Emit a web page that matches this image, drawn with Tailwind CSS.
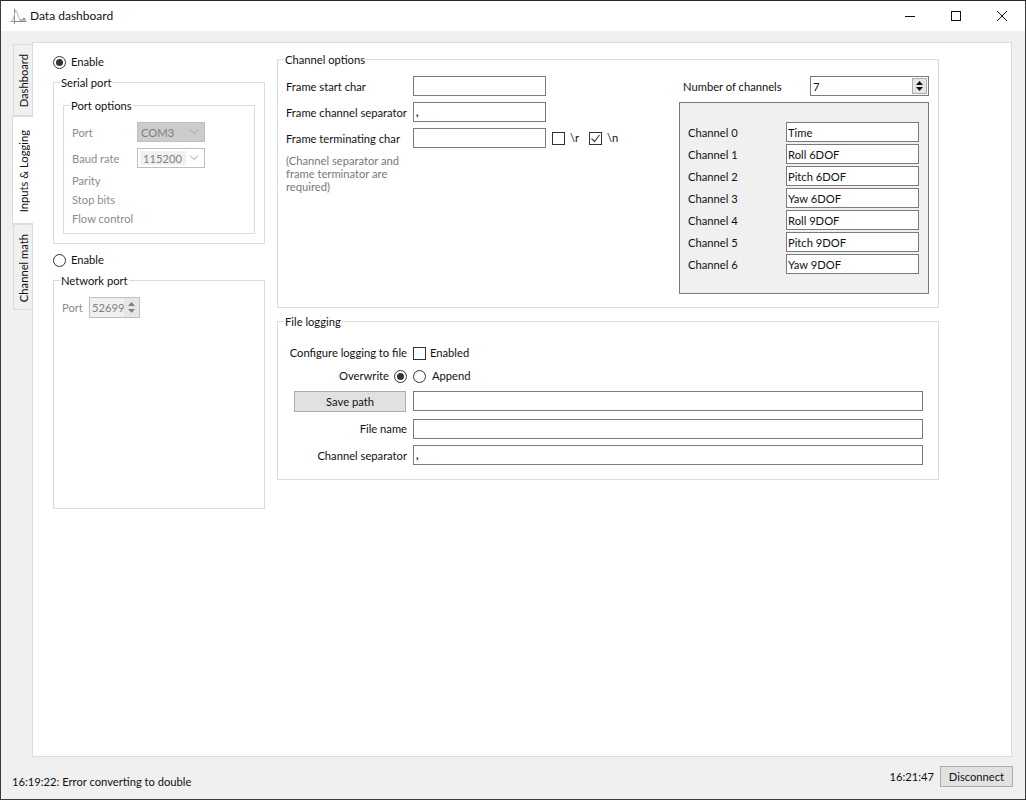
<!DOCTYPE html>
<html lang="en">

<head>
    <meta charset="UTF-8">
    <title>Data dashboard</title>
    <script src="https://cdn.jsdelivr.net/npm/@tailwindcss/browser@4"></script>
</head>

<body class="bg-[#f0f0f0]">
    <div class="w-[1026px] h-[800px] flex flex-col overflow-hidden border border-[#3c3c3c] border-t-[#2a2a2a] bg-[#f0f0f0] font-['Lato',sans-serif] text-[11.2px] leading-[16px] text-[#111]">

        <!-- title bar -->
        <div class="h-[30px] shrink-0 bg-white flex items-center">
            <svg class="ml-[9px] w-[17px] h-[17px]" viewBox="0 0 17 17" fill="none">
                <path d="M4.5 0.5V16M0.5 13.5H16.5" stroke="#8d8d8d" />
                <path d="M1.5 13C4 12 5 2 6 2C7 2 8 12 11.5 13" stroke="#b5b5b5" />
                <path d="M10 12H16M13 10.5H15" stroke="#777" />
            </svg>
            <span class="ml-[3px] text-[12px]">Data dashboard</span>
            <div class="ml-auto flex items-center h-full">
                <div class="w-[46px] flex justify-center">
                    <svg class="w-[10px] h-[10px]" viewBox="0 0 10 10"><path d="M0 5.5H10" stroke="#111" /></svg>
                </div>
                <div class="w-[46px] flex justify-center">
                    <svg class="w-[10px] h-[10px]" viewBox="0 0 10 10" fill="none"><rect x="0.5" y="0.5" width="9" height="9" stroke="#111" /></svg>
                </div>
                <div class="w-[46px] flex justify-center">
                    <svg class="w-[10px] h-[10px]" viewBox="0 0 10 10" fill="none"><path d="M0 0L10 10M10 0L0 10" stroke="#111" /></svg>
                </div>
            </div>
        </div>

        <!-- tabs and pane -->
        <div class="flex pl-[10px] pt-[11px] shrink-0">
            <div class="w-[21px] pt-[2px] flex flex-col items-end shrink-0">
                <div class="w-[18px] h-[72px] mr-px pl-[2px] pt-[2px] flex items-center justify-center border border-r-0 border-[#dcdcdc] bg-[#f0f0f0]">
                    <span class="[writing-mode:vertical-rl] rotate-180 whitespace-nowrap">Dashboard</span>
                </div>
                <div class="relative z-10 w-[21px] h-[108px] -mr-px pl-[2px] pt-[2px] flex items-center justify-center border border-r-0 border-[#dcdcdc] bg-white">
                    <span class="[writing-mode:vertical-rl] rotate-180 whitespace-nowrap">Inputs &amp; Logging</span>
                </div>
                <div class="w-[18px] h-[86px] mr-px pl-[2px] pt-[2px] flex items-center justify-center border border-r-0 border-[#dcdcdc] bg-[#f0f0f0]">
                    <span class="[writing-mode:vertical-rl] rotate-180 whitespace-nowrap">Channel math</span>
                </div>
            </div>

            <div class="w-[980px] h-[715px] border border-[#dcdcdc] bg-white flex gap-[12px] pl-[20px] pt-[11px]">

                <!-- left column -->
                <div class="w-[212px] shrink-0">
                    <div class="h-[16px] flex items-center gap-[5px]">
                        <span class="w-[13px] h-[13px] rounded-full border border-[#333] flex items-center justify-center"><span class="w-[7px] h-[7px] rounded-full bg-[#333]"></span></span>
                        <span>Enable</span>
                    </div>
                    <div class="relative mt-[12px] h-[162px] border border-[#dcdcdc] px-[9px] pt-[22px]">
                        <span class="absolute left-[6px] -top-[8px] bg-white px-px">Serial port</span>
                        <div class="relative h-[129px] border border-[#dcdcdc] pl-[8px] pt-[16px] text-[#8c8c8c]">
                            <span class="absolute left-[6px] -top-[8px] bg-white px-px text-[#111]">Port options</span>
                            <div class="flex items-center h-[20px]">
                                <span class="w-[65px] pt-[2px]">Port</span>
                                <div class="w-[68px] h-[20px] bg-[#cccccc] border border-[#bfbfbf] flex items-center justify-between pl-[3px] pr-[5px] text-[#808080]">
                                    <span class="pt-[2px]">COM3</span>
                                    <svg class="w-[10px] h-[6px]" viewBox="0 0 10 6" fill="none"><path d="M1 0.5L5 4.5L9 0.5" stroke="#a3a3a3" /></svg>
                                </div>
                            </div>
                            <div class="flex items-center h-[20px] mt-[6px]">
                                <span class="w-[65px] pt-[2px]">Baud rate</span>
                                <div class="w-[68px] h-[20px] bg-white border border-[#bfbfbf] flex items-center justify-between pl-[2px] pr-[5px] text-[#808080]">
                                    <span class="bg-[#f0f0f0] w-[46px] h-[14px] pl-[3px] leading-[15px]">115200</span>
                                    <svg class="w-[10px] h-[6px]" viewBox="0 0 10 6" fill="none"><path d="M1 0.5L5 4.5L9 0.5" stroke="#a3a3a3" /></svg>
                                </div>
                            </div>
                            <div class="mt-[3px] h-[19px] flex items-center">Parity</div>
                            <div class="h-[19px] flex items-center">Stop bits</div>
                            <div class="h-[19px] flex items-center">Flow control</div>
                        </div>
                    </div>
                    <div class="h-[16px] mt-[8px] flex items-center gap-[5px]">
                        <span class="w-[13px] h-[13px] rounded-full border border-[#333]"></span>
                        <span>Enable</span>
                    </div>
                    <div class="relative mt-[12px] h-[229px] border border-[#dcdcdc] pl-[8px] pt-[16px]">
                        <span class="absolute left-[6px] -top-[8px] bg-white px-px">Network port</span>
                        <div class="flex items-center text-[#8c8c8c]">
                            <span class="w-[27px]">Port</span>
                            <div class="w-[51px] h-[21px] bg-[#f0f0f0] border border-[#bfbfbf] flex items-center justify-between pl-[2px] text-[#808080]">
                                <span>52699</span>
                                <div class="w-[15px] h-full flex flex-col items-center justify-center gap-[3px] bg-[#e6e6e6]">
                                    <svg class="w-[7px] h-[4px]" viewBox="0 0 7 4"><path d="M3.5 0L7 4H0Z" fill="#808080" /></svg>
                                    <svg class="w-[7px] h-[4px]" viewBox="0 0 7 4"><path d="M0 0H7L3.5 4Z" fill="#808080" /></svg>
                                </div>
                            </div>
                        </div>
                    </div>
                </div>

                <!-- right column -->
                <div class="w-[662px] shrink-0 mt-[5px]">
                    <div class="relative h-[249px] border border-[#dcdcdc] flex">
                        <span class="absolute left-[6px] -top-[8px] bg-white px-px">Channel options</span>
                        <div class="w-[401px] pl-[8px] pt-[16px]">
                            <div class="flex items-center h-[20px]">
                                <span class="w-[127px] pt-[2px] whitespace-nowrap">Frame start char</span>
                                <div class="w-[133px] h-[20px] border border-[#7a7a7a]"></div>
                            </div>
                            <div class="flex items-center h-[20px] mt-[6px]">
                                <span class="w-[127px] pt-[2px] whitespace-nowrap">Frame channel separator</span>
                                <div class="w-[133px] h-[20px] border border-[#7a7a7a] pl-[2px] flex items-center font-bold">,</div>
                            </div>
                            <div class="flex items-center h-[20px] mt-[6px]">
                                <span class="w-[127px] pt-[2px] whitespace-nowrap">Frame terminating char</span>
                                <div class="w-[133px] h-[20px] border border-[#7a7a7a]"></div>
                                <span class="ml-[6px] w-[13px] h-[13px] border border-[#333]"></span>
                                <span class="ml-[5px] w-[7px]">\r</span>
                                <span class="ml-[12px] w-[13px] h-[13px] border border-[#333] flex items-center justify-center">
                                    <svg class="w-[11px] h-[11px]" viewBox="0 0 11 11" fill="none"><path d="M1.5 5.5L4.5 8.5L9.5 2" stroke="#444" stroke-width="1.2" /></svg>
                                </span>
                                <span class="ml-[5px]">\n</span>
                            </div>
                            <p class="mt-[6px] w-[125px] leading-[13px] text-[#787878]">(Channel separator and frame terminator are required)</p>
                        </div>
                        <div class="w-[250px] pt-[16px]">
                            <div class="flex items-center h-[20px]">
                                <span class="w-[131px] pl-[4px] pt-[2px] whitespace-nowrap">Number of channels</span>
                                <div class="w-[119px] h-[20px] border border-[#7a7a7a] pl-[2px] flex items-center justify-between">
                                    <span class="pt-[2px]">7</span>
                                    <div class="w-[15px] h-[16px] mr-px border border-[#adadad] bg-[#e6e6e6] flex flex-col items-center justify-center gap-[2px]">
                                        <svg class="w-[7px] h-[4px]" viewBox="0 0 7 4"><path d="M3.5 0L7 4H0Z" fill="#111" /></svg>
                                        <svg class="w-[7px] h-[4px]" viewBox="0 0 7 4"><path d="M0 0H7L3.5 4Z" fill="#111" /></svg>
                                    </div>
                                </div>
                            </div>
                            <div class="mt-[6px] h-[192px] border border-[#7a7a7a] bg-[#f0f0f0] pl-[8px] pt-[19px] flex flex-col gap-[2px]">
                                <div class="flex items-center"><span class="w-[98px] pt-[2px]">Channel 0</span><div class="w-[133px] h-[20px] pt-[2px] bg-white border border-[#7a7a7a] pl-px flex items-center">Time</div></div>
                                <div class="flex items-center"><span class="w-[98px] pt-[2px]">Channel 1</span><div class="w-[133px] h-[20px] pt-[2px] bg-white border border-[#7a7a7a] pl-px flex items-center">Roll 6DOF</div></div>
                                <div class="flex items-center"><span class="w-[98px] pt-[2px]">Channel 2</span><div class="w-[133px] h-[20px] pt-[2px] bg-white border border-[#7a7a7a] pl-px flex items-center">Pitch 6DOF</div></div>
                                <div class="flex items-center"><span class="w-[98px] pt-[2px]">Channel 3</span><div class="w-[133px] h-[20px] pt-[2px] bg-white border border-[#7a7a7a] pl-px flex items-center">Yaw 6DOF</div></div>
                                <div class="flex items-center"><span class="w-[98px] pt-[2px]">Channel 4</span><div class="w-[133px] h-[20px] pt-[2px] bg-white border border-[#7a7a7a] pl-px flex items-center">Roll 9DOF</div></div>
                                <div class="flex items-center"><span class="w-[98px] pt-[2px]">Channel 5</span><div class="w-[133px] h-[20px] pt-[2px] bg-white border border-[#7a7a7a] pl-px flex items-center">Pitch 9DOF</div></div>
                                <div class="flex items-center"><span class="w-[98px] pt-[2px]">Channel 6</span><div class="w-[133px] h-[20px] pt-[2px] bg-white border border-[#7a7a7a] pl-px flex items-center">Yaw 9DOF</div></div>
                            </div>
                        </div>
                    </div>

                    <div class="relative mt-[13px] h-[159px] border border-[#dcdcdc] pt-[23px]">
                        <span class="absolute left-[6px] -top-[8px] bg-white px-px">File logging</span>
                        <div class="flex items-center h-[16px]">
                            <span class="w-[129px] text-right whitespace-nowrap">Configure logging to file</span>
                            <span class="ml-[6px] w-[13px] h-[13px] border border-[#333]"></span>
                            <span class="ml-[4px]">Enabled</span>
                        </div>
                        <div class="flex items-center h-[16px] mt-[7px]">
                            <span class="w-[111px] text-right">Overwrite</span>
                            <span class="ml-[5px] w-[13px] h-[13px] rounded-full border border-[#333] flex items-center justify-center"><span class="w-[7px] h-[7px] rounded-full bg-[#333]"></span></span>
                            <span class="ml-[6px] w-[13px] h-[13px] rounded-full border border-[#333]"></span>
                            <span class="ml-[6px]">Append</span>
                        </div>
                        <div class="flex items-center h-[20px] mt-[7px]">
                            <div class="ml-[16px] w-[112px] h-[21px] pt-[2px] bg-[#e1e1e1] border border-[#adadad] flex items-center justify-center">Save path</div>
                            <div class="ml-[7px] w-[510px] h-[20px] border border-[#7a7a7a]"></div>
                        </div>
                        <div class="flex items-center h-[20px] mt-[8px]">
                            <span class="w-[129px] text-right">File name</span>
                            <div class="ml-[6px] w-[510px] h-[20px] border border-[#7a7a7a]"></div>
                        </div>
                        <div class="flex items-center h-[20px] mt-[6px]">
                            <span class="w-[129px] pt-[2px] text-right">Channel separator</span>
                            <div class="ml-[6px] w-[510px] h-[20px] border border-[#7a7a7a] pl-[2px] flex items-center font-bold">,</div>
                        </div>
                    </div>
                </div>
            </div>
        </div>

        <!-- status bar -->
        <div class="flex items-center h-[41px] pl-[11px] pr-[12px]">
            <span class="mt-[9px]">16:19:22: Error converting to double</span>
            <span class="ml-auto mb-[2px]">16:21:47</span>
            <div class="ml-[6px] mb-[2px] w-[73px] h-[21px] bg-[#e1e1e1] border border-[#adadad] flex items-center justify-center">Disconnect</div>
        </div>
    </div>
</body>

</html>
